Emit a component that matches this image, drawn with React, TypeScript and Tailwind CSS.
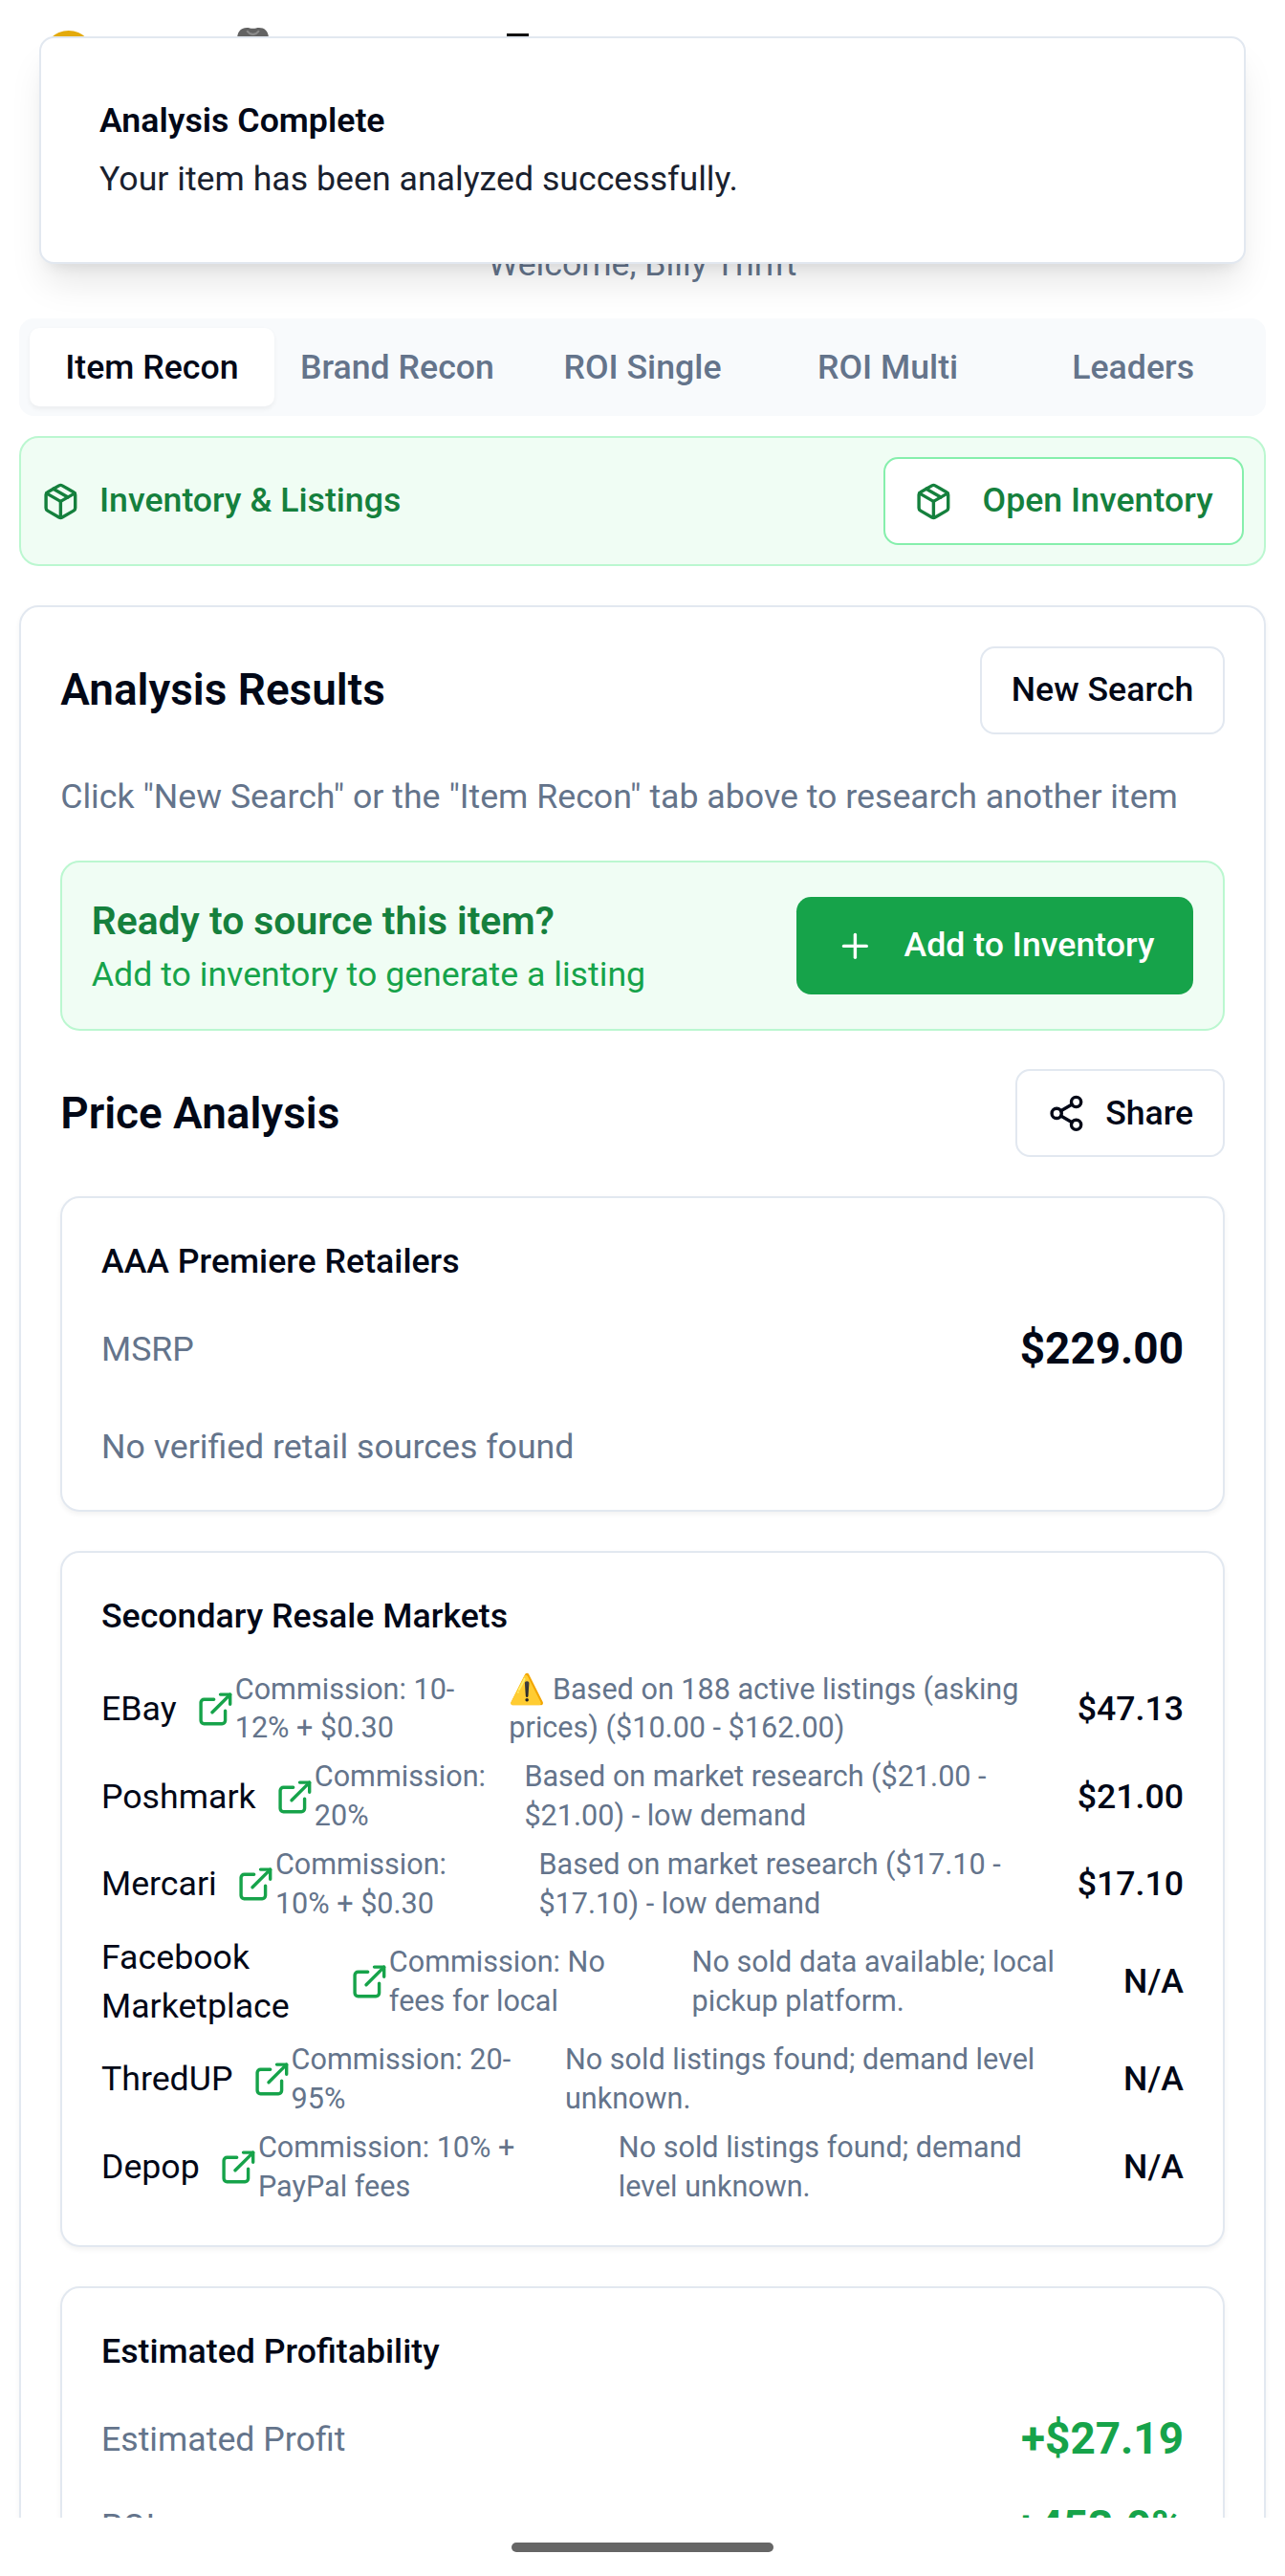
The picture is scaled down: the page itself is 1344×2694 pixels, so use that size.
import type { ReactNode } from "react";
import { ExternalLink, Package, Plus, Share2 } from "lucide-react";

const tabs = ["Item Recon", "Brand Recon", "ROI Single", "ROI Multi", "Leaders"];

type Market = {
  name: ReactNode;
  nameClass: string;
  leftClass: string;
  fee: [string, string];
  note: [string, string];
  price: string;
};

const markets: Market[] = [
  {
    name: "EBay",
    nameClass: "",
    leftClass: "w-[167.2px]",
    fee: ["Commission: 10-", "12% + $0.30"],
    note: ["⚠️ Based on 188 active listings (asking", "prices) ($10.00 - $162.00)"],
    price: "$47.13",
  },
  {
    name: "Poshmark",
    nameClass: "",
    leftClass: "w-[173.5px]",
    fee: ["Commission:", "20%"],
    note: ["Based on market research ($21.00 -", "$21.00) - low demand"],
    price: "$21.00",
  },
  {
    name: "Mercari",
    nameClass: "",
    leftClass: "w-[179.4px]",
    fee: ["Commission:", "10% + $0.30"],
    note: ["Based on market research ($17.10 -", "$17.10) - low demand"],
    price: "$17.10",
  },
  {
    name: (
      <>
        Facebook
        <br />
        Marketplace
      </>
    ),
    nameClass: "w-[94px]",
    leftClass: "w-[242.2px]",
    fee: ["Commission: No", "fees for local"],
    note: ["No sold data available; local", "pickup platform."],
    price: "N/A",
  },
  {
    name: "ThredUP",
    nameClass: "",
    leftClass: "w-[190.2px]",
    fee: ["Commission: 20-", "95%"],
    note: ["No sold listings found; demand level", "unknown."],
    price: "N/A",
  },
  {
    name: "Depop",
    nameClass: "",
    leftClass: "w-[212.1px]",
    fee: ["Commission: 10% +", "PayPal fees"],
    note: ["No sold listings found; demand", "level unknown."],
    price: "N/A",
  },
];

function Card({ title, children }: { title: string; children: ReactNode }) {
  return (
    <section className="rounded-lg border border-[#e2e8f0] bg-white p-4 shadow-[0_1px_2px_0_rgba(0,0,0,0.05)]">
      <h4 className="mb-3 text-sm font-medium">{title}</h4>
      {children}
    </section>
  );
}

function Header() {
  return (
    <header className="flex h-[130.7px] flex-col pt-[11.2px]">
      <div className="flex h-[87.3px] items-start">
        <svg className="ml-[17.5px] mt-[1.5px] h-[21px] w-[21px]" viewBox="0 0 21 21">
          <circle cx="10.5" cy="10.5" r="10.5" fill="#e3aa0c" />
        </svg>
        <svg className="ml-[58.8px] h-[16px] w-[13px]" viewBox="0 0 13 16">
          <path d="M0 5C0 1.5 1.5 0 4 0C5 0 5.5 .3 6.5 .3S8 0 9 0C11.5 0 13 1.5 13 5V16H0Z" fill="#626262" />
          <path d="M4 1.2C5.5 3.2 7.5 3.2 9 1.2" fill="none" stroke="#8a8a8a" strokeWidth="0.8" />
        </svg>
        <div className="ml-[97.5px] mt-[2.4px] h-[3px] w-[9px] bg-[#111111]" />
      </div>
      <p className="text-center text-sm text-[#64748b]">Welcome, Billy Thrift</p>
    </header>
  );
}

function Toast() {
  return (
    <div className="absolute left-4 right-4 top-[14.8px] flex flex-col gap-1 rounded-md border border-[#e2e8f0] bg-white p-6 shadow-[0_10px_15px_-3px_rgba(0,0,0,0.1),0_4px_6px_-4px_rgba(0,0,0,0.1)]">
      <div className="text-sm font-semibold">Analysis Complete</div>
      <div className="text-sm opacity-90">Your item has been analyzed successfully.</div>
    </div>
  );
}

function TabBar() {
  return (
    <nav className="grid h-10 grid-cols-5 rounded-md bg-[#f8fafc] p-1 text-sm font-medium text-[#64748b]">
      {tabs.map((tab, i) => (
        <button
          key={tab}
          className={
            i === 0
              ? "rounded-sm bg-white text-[#020817] shadow-[0_1px_2px_0_rgba(0,0,0,0.05)]"
              : "rounded-sm"
          }
        >
          {tab}
        </button>
      ))}
    </nav>
  );
}

function InventoryBar() {
  return (
    <div className="mt-2 flex items-center justify-between rounded-lg border border-[#bbf7d0] bg-[#f0fdf4] p-2 text-sm font-medium text-[#15803d]">
      <div className="flex items-center gap-2">
        <Package className="size-4" />
        <span>Inventory &amp; Listings</span>
      </div>
      <button className="flex h-9 items-center rounded-md border border-[#86efac] bg-white px-3">
        <Package className="mr-3 size-4" />
        Open Inventory
      </button>
    </div>
  );
}

function MarketRow({ market }: { market: Market }) {
  return (
    <div className="flex items-center whitespace-nowrap">
      <div className={"flex shrink-0 items-center " + market.leftClass}>
        <span className={"mr-2 shrink-0 text-sm " + market.nameClass}>{market.name}</span>
        <ExternalLink className="size-4 shrink-0 text-[#16a34a]" />
        <span className="text-xs text-[#64748b]">
          {market.fee[0]}
          <br />
          {market.fee[1]}
        </span>
      </div>
      <span className="grow text-xs text-[#64748b]">
        {market.note[0]}
        <br />
        {market.note[1]}
      </span>
      <span className="text-sm font-medium">{market.price}</span>
    </div>
  );
}

function Metric({ label, value, tone }: { label: string; value: string; tone: string }) {
  return (
    <div className="flex items-center justify-between">
      <span className="text-sm text-[#64748b]">{label}</span>
      <span className={"text-lg font-bold " + tone}>{value}</span>
    </div>
  );
}

export default function App() {
  return (
    <div className="h-[2694px] w-[1344px] overflow-hidden bg-white">
      <div className="h-[2633px] overflow-hidden">
        <div className="relative font-[Roboto,sans-serif] text-[#020817] [zoom:2.55]">
          <Header />
          <main className="px-2">
            <TabBar />
            <InventoryBar />
            <div className="mt-4 flex flex-col gap-4 rounded-lg border border-[#e2e8f0] p-4 shadow-[0_1px_2px_0_rgba(0,0,0,0.05)]">
              <div className="flex items-center justify-between">
                <h2 className="text-lg font-semibold">Analysis Results</h2>
                <button className="h-9 rounded-md border border-[#e2e8f0] px-3 text-sm font-medium">
                  New Search
                </button>
              </div>
              <p className="whitespace-nowrap text-sm text-[#64748b]">
                Click "New Search" or the "Item Recon" tab above to research another item
              </p>
              <div className="flex items-center justify-between rounded-lg border border-[#bbf7d0] bg-[#f0fdf4] p-3">
                <div>
                  <h3 className="text-base font-semibold text-[#15803d]">Ready to source this item?</h3>
                  <p className="text-sm text-[#16a34a]">Add to inventory to generate a listing</p>
                </div>
                <button className="flex h-10 items-center rounded-md bg-[#16a34a] px-4 text-sm font-medium text-white">
                  <Plus className="mr-3 size-4" />
                  Add to Inventory
                </button>
              </div>
              <div className="flex items-center justify-between">
                <h2 className="text-lg font-semibold">Price Analysis</h2>
                <button className="flex h-9 items-center gap-2 rounded-md border border-[#e2e8f0] px-3 text-sm font-medium">
                  <Share2 className="size-4" />
                  Share
                </button>
              </div>
              <Card title="AAA Premiere Retailers">
                <Metric label="MSRP" value="$229.00" tone="text-[#020817]" />
                <p className="mt-4 text-sm text-[#64748b]">No verified retail sources found</p>
              </Card>
              <Card title="Secondary Resale Markets">
                <div className="flex flex-col gap-1">
                  {markets.map((m) => (
                    <MarketRow key={m.fee.join(" ")} market={m} />
                  ))}
                </div>
              </Card>
              <Card title="Estimated Profitability">
                <div className="flex flex-col gap-2">
                  <Metric label="Estimated Profit" value="+$27.19" tone="text-[#16a34a]" />
                  <Metric label="ROI" value="+453.0%" tone="text-[#16a34a]" />
                </div>
              </Card>
            </div>
          </main>
          <Toast />
        </div>
      </div>
      <div className="mx-auto mt-[26px] h-[10px] w-[274px] rounded-full bg-[#666666]" />
    </div>
  );
}
